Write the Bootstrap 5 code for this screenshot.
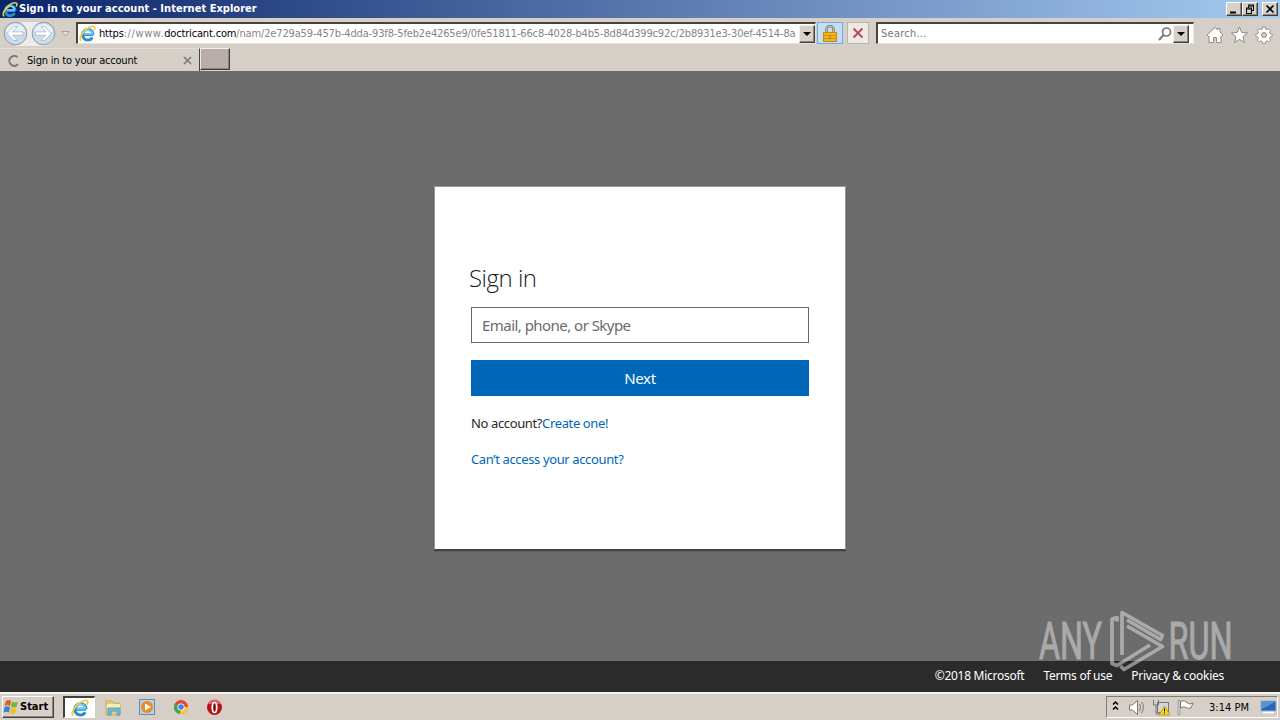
<!DOCTYPE html>
<html lang="en">
<head>
    <meta charset="UTF-8">
    <meta name="viewport" content="width=device-width, initial-scale=1.0">
    <title>Sign in to your account</title>

    <!-- Bootstrap CSS -->
    <link href="https://cdn.jsdelivr.net/npm/bootstrap@5.3.0/dist/css/bootstrap.min.css" rel="stylesheet">
    <style>
        body { width: 1280px; height: 720px; overflow: hidden; background: #d6cfc7; color: #000; font-family: "DejaVu Sans Condensed", "DejaVu Sans", sans-serif; font-size: 11px; line-height: 14px; }
        svg { display: block; flex: none; }
        .title-bar { height: 18px; padding-left: 2px; padding-right: 2px; background: linear-gradient(90deg, #0a246a, #a6caf0); color: #fff; }
        .title-text { font-weight: bold; margin-left: 1px; letter-spacing: .03px; }
        .win-btn { width: 16px; height: 14px; background: #d6d0c8; border: 1px solid; border-color: #fff #404040 #404040 #fff; box-shadow: inset -1px -1px #8c8880; }
        .nav-bar { height: 30px; padding-top: 4px; }
        .field { height: 22px; background: #fff; border: 1px solid #e8e3da; border-top: 2px solid #48433d; border-left: 2px solid #48433d; }
        .address { width: 740px; margin-left: 4px; }
        .address > svg { margin-left: 1px; }
        .url { width: 697px; margin-left: 3px; overflow: hidden; white-space: nowrap; color: #858585; letter-spacing: -.15px; padding-top: 1px; }
        .url b { font-weight: normal; color: #000; letter-spacing: -.17px; }
        .url .url-www { letter-spacing: .6px; }
        .drop { width: 16px; height: 18px; background: #d6d0c8; border: 1px solid; border-color: #f5f2ec #404040 #404040 #f5f2ec; box-shadow: inset -1px -1px #8c8880; }
        .tool-btn { height: 22px; border: 1px solid #b9b6b2; background: #ece9e6; }
        .lock-btn { width: 26px; margin-left: 1px; background: #c5def8; border-color: #7ba8dc; }
        .stop-btn { width: 22px; margin-left: 4px; }
        .search { width: 318px; margin-left: 7px; padding-left: 3px; color: #777; letter-spacing: .25px; }
        .tab-row { height: 23px; }
        .page-tab { width: 200px; height: 23px; padding-left: 7px; padding-right: 7px; border-right: 1px solid #454545; border-top: 1px solid #e3ddd6; }
        .tab-text { margin-left: 5px; padding-top: 1px; letter-spacing: -.2px; }
        .new-tab { width: 30px; height: 22px; background: #b9aca9; border: 1px solid #3c3c3c; border-top-color: #f3efe9; border-left-color: #eee9e3; box-shadow: inset -1px -1px #8c8480; }
        .page-view { height: 621px; background: #6c6c6c; font-family: "Noto Sans", "Open Sans", sans-serif; }
        .login-box { width: 412px; height: 364px; margin-top: 115px; padding: 76px 36px 0; background: #fff; border: 1px solid #999; border-bottom-color: #444; box-shadow: 0 1px 1px #414141; color: #262626; font-size: 13px; line-height: 18px; letter-spacing: -.37px; }
        .login-title { font-family: "Open Sans", sans-serif; font-size: 24px; line-height: 30px; font-weight: 300; margin: 0 0 14px -2px; letter-spacing: -.5px; color: #1b1b1b; }
        .login-input { height: 36px; padding: 0 10px; border: 1px solid #666; border-radius: 0; font-size: 15px; letter-spacing: -.54px; }
        .login-input::placeholder { color: #6b6b6b; }
        .login-btn { height: 36px; margin-top: 17px; padding: 0; border-radius: 0; background: #0067b8; color: #fff; font-size: 15px; letter-spacing: -.4px; }
        .login-link { margin-top: 18px; }
        .login-box a { color: #0067b8; text-decoration: none; }
        .page-footer { height: 31px; padding: 0 56px 2px 0; gap: 19px; background: #2b2b2b; color: #fff; font-size: 12px; letter-spacing: -.27px; }
        .watermark { position: absolute; left: 1030px; top: 605px; }
        .task-bar { height: 28px; border-top: 2px solid #f4f1ec; padding: 2px 2px 0 0; }
        .start-btn { width: 52px; height: 22px; margin-left: 2px; background: #d6d0c8; border: 1px solid; border-color: #fff #404040 #404040 #fff; box-shadow: inset -1px -1px #8c8880; font-weight: bold; }
        .start-btn span { margin-left: 1px; }
        .task-active { width: 32px; height: 22px; margin-left: 9px; background: #fff; border: 1px solid #fff; border-top: 2px solid #404040; border-left: 2px solid #404040; }
        .tray { width: 172px; height: 22px; border: 1px solid; border-color: #817c75 #fff #fff #817c75; }
        .clock { padding-top: 1px; }
    </style>
</head>
<body class="d-flex flex-column">

    <!-- Shared browser logo -->
    <svg width="0" height="0" class="position-absolute">
        <defs>
            <symbol id="ie" viewBox="0 0 16 16">
                <path d="M13.500 9H4.500M13.300 9A5 5 0 1 0 12.600 11.800" fill="none" stroke="#2a8fd0" stroke-width="2.800"/>
                <path d="M12.800 8.500H5M12.800 8.300A4.700 4.700 0 0 0 3.800 8" fill="none" stroke="#7ad3f7" stroke-width="1.500"/>
                <path d="M2.200 14.800C-.6 13 3 6.500 7.500 3.500 12 .4 16.400.2 14.300 5" fill="none" stroke="#f3cb3d" stroke-width="1.600"/>
            </symbol>
        </defs>
    </svg>

    <!-- Window title -->
    <div class="title-bar d-flex align-items-center">
        <svg width="16" height="17"><use href="#ie"/></svg>
        <span class="title-text">Sign in to your account - Internet Explorer</span>
        <div class="d-flex ms-auto">
            <div class="win-btn"><svg width="14" height="12"><path d="M3 9.500h6" stroke="#000" stroke-width="2"/></svg></div>
            <div class="win-btn"><svg width="14" height="12"><path d="M5 2h6M5 3h6M5.500 3v2M10.500 2v6M8 7.500h3M3 5h6M3 6h6M3.500 5v6M8.500 5v6M3 10.500h6" stroke="#000" fill="none"/></svg></div>
            <div class="win-btn ms-1"><svg width="14" height="12"><path d="M3.500 2.500l7 7M10.500 2.500l-7 7" stroke="#000" stroke-width="1.700"/></svg></div>
        </div>
    </div>

    <!-- Navigation -->
    <div class="nav-bar d-flex align-items-start">
        <svg width="72" height="25" viewBox="0 0 72 25">
            <path d="M15 0H43a12 12 0 0 1 0 24H15z" fill="#eeebe8"/>
            <g stroke="#8a96a5" fill="#cbdbe9"><circle cx="15.500" cy="11.500" r="11.300"/><circle cx="43.500" cy="11.500" r="11.300"/></g>
            <path d="M6 10a9.500 8 0 0 1 19 0zM34 10a9.500 8 0 0 1 19 0z" fill="#e6f0f8"/>
            <g fill="#fff" stroke="#a5b8ca" stroke-width=".8"><path d="M7 11.500l7-7h3.500l-5 5.300H23v3.500H12.500l5 5.200H14z"/><path d="M51.500 11.500l-7-7H41l5 5.300H35.500v3.500H46l-5 5.200h3.500z"/></g>
            <path d="M61.500 9.500h8l-4 4.500z" fill="#e4dfd9" stroke="#a9a39c"/>
        </svg>
        <div class="field address d-flex align-items-center">
            <svg width="17" height="17"><use href="#ie"/></svg>
            <div class="url"><b>https</b><span class="url-www">://www.</span><b>doctricant.com</b>/nam/2e729a59-457b-4dda-93f8-5feb2e4265e9/0fe51811-66c8-4028-b4b5-8d84d399c92c/2b8931e3-30ef-4514-8a</div>
            <div class="drop ms-auto"><svg width="14" height="16"><path d="M3 6h8l-4 4z"/></svg></div>
        </div>
        <div class="tool-btn lock-btn d-flex justify-content-center align-items-center">
            <svg width="14" height="17" viewBox="0 0 14 17"><path d="M3.500 8V4.500a3.500 3.500 0 0 1 7 0V8" fill="none" stroke="#777247" stroke-width="2.400"/><path d="M3.500 8V4.500a3.500 3.500 0 0 1 7 0V8" fill="none" stroke="#d2cda8"/><rect x=".5" y="7.500" width="13" height="9" fill="#f1b51c" stroke="#c48a14"/><path d="M1 10.500h12M1 13.500h12" stroke="#d0940f"/><path d="M7 10v4" stroke="#a87612"/></svg>
        </div>
        <div class="tool-btn stop-btn d-flex justify-content-center align-items-center">
            <svg width="12" height="12"><path d="M1.500 1.500l9 9M10.500 1.500l-9 9" stroke="#bd4b52" stroke-width="2"/></svg>
        </div>
        <div class="field search d-flex align-items-center">
            <span>Search...</span>
            <svg width="15" height="16" class="ms-auto"><circle cx="8.500" cy="6" r="4" fill="none" stroke="#777" stroke-width="1.700"/><path d="M5.500 9L1 14" stroke="#777" stroke-width="2"/></svg>
            <div class="drop me-1"><svg width="14" height="16"><path d="M3 6h8l-4 4z"/></svg></div>
        </div>
        <svg width="72" height="24" viewBox="0 0 72 24" class="ms-auto me-1">
            <g fill="#fff" stroke="#918b85">
                <path d="M3 13l8-7.500 2.500 2.500V6.500H16V10l3 3-1.500 1.500-.5-.500V20.500h-4.500v-5h-3v5H5V14l-.5.500z"/>
                <path d="M35.500 5l2.300 5.500 5.700.4-4.500 3.800 1.500 5.800-5-3.200-5 3.200 1.500-5.800-4.500-3.800 5.700-.4z"/>
                <path d="M58.500 5h3l.5 2.200 1.500.6 1.900-1.200 2 2-1.200 1.900.6 1.500 2.200.5v3l-2.200.5-.6 1.500 1.200 1.900-2 2-1.900-1.200-1.500.6-.5 2.200h-3l-.5-2.200-1.500-.6-1.900 1.200-2-2 1.200-1.900-.6-1.500-2.200-.5v-3l2.200-.5.6-1.500-1.200-1.900 2-2 1.900 1.200 1.500-.6z" stroke-linejoin="round" transform="translate(6 .7) scale(.9)"/>
                <circle cx="60" cy="13" r="2.500" fill="#d6cfc7"/>
            </g>
        </svg>
    </div>

    <!-- Tabs -->
    <div class="tab-row d-flex">
        <div class="page-tab d-flex align-items-center">
            <svg width="15" height="15"><path d="M10.500 4A5 5 0 1 0 11 11.300" fill="none" stroke="#777" stroke-width="2"/></svg>
            <span class="tab-text">Sign in to your account</span>
            <svg width="9" height="9" class="ms-auto"><path d="M1 1l7 7M8 1l-7 7" stroke="#807a75" stroke-width="1.700"/></svg>
        </div>
        <div class="new-tab"></div>
    </div>

    <!-- Page -->
    <main class="page-view d-flex flex-column">
        <form class="login-box mx-auto">
            <h1 class="login-title">Sign in</h1>
            <input type="text" class="form-control login-input" placeholder="Email, phone, or Skype" aria-label="Email">
            <button type="button" class="btn w-100 login-btn d-block">Next</button>
            <div class="login-link"><span>No account?</span><a href="#">Create one!</a></div>
            <div class="login-link"><a href="#">Can’t access your account?</a></div>
        </form>
        <footer class="page-footer mt-auto d-flex justify-content-end align-items-center">
            <span>©2018 Microsoft</span>
            <span>Terms of use</span>
            <span>Privacy &amp; cookies</span>
        </footer>
    </main>

    <!-- Watermark over the page -->
    <svg class="watermark" width="210" height="72" viewBox="0 0 210 72" opacity=".55">
        <g fill="#ddd" stroke="#ddd" stroke-width="1" font-family="Roboto, sans-serif" font-size="51">
            <text x="9" y="54" textLength="63" lengthAdjust="spacingAndGlyphs">ANY</text>
            <text x="138.500" y="54" textLength="64" lengthAdjust="spacingAndGlyphs">RUN</text>
        </g>
        <path d="M87 16.500V12.500L82 14V58.500L87 60.500L120 40M92 50V7.500L132.500 30.500L130.500 34.500L97 15M97 21L132.500 41.500L94 64.500L90.500 61" fill="none" stroke="#ddd" stroke-width="3.700" stroke-linejoin="round"/>
    </svg>

    <!-- Taskbar -->
    <div class="task-bar d-flex align-items-start">
        <div class="start-btn d-flex align-items-center">
            <svg width="16" height="16" viewBox="0 0 16 16"><path d="M3 2q3-2 5 0L7 7Q4 5 1.500 7z" fill="#e75b21"/><path d="M9 2.500q3 2 6 0L13.500 8Q11 9 8 7.500z" fill="#76b72a"/><path d="M1.500 8Q4 6.500 7 8l-1 5.500Q3 12 .5 13.500z" fill="#3b83d0"/><path d="M8 8.500q3 2 5.500.5L12 14.500q-3 1.500-5-.5z" fill="#f5be20"/></svg>
            <span>Start</span>
        </div>
        <div class="task-active d-flex justify-content-center align-items-center"><svg width="18" height="18"><use href="#ie"/></svg></div>
        <svg width="130" height="22" viewBox="0 0 130 22">
            <path d="M11 5h6l2 2h6v12H11z" fill="#e8cd72" stroke="#b99d4b" stroke-width=".7"/>
            <path d="M12 8h13v5H12z" fill="#f9edac"/><path d="M13 19v-7h12v7h-3v-4h-6v4z" fill="#74bce2" stroke="#438eb7" stroke-width=".7"/>
            <rect x="44.500" y="3.500" width="15" height="15" fill="#b5d1ea" stroke="#638cb9"/><circle cx="52" cy="11" r="6" fill="#ee8c19"/><path d="M50 7.500l6 3.500-6 3.500z" fill="#fff"/>
            <circle cx="86" cy="11" r="7" fill="#e84536"/><path d="M86 11l-6-3.500A7 7 0 0 0 85 18z" fill="#36a852"/><path d="M86 11h7a7 7 0 0 1-8 7z" fill="#f8cb2e"/><circle cx="86" cy="11" r="3.600" fill="#fff"/><circle cx="86" cy="11" r="2.800" fill="#4385e5"/>
            <circle cx="119.500" cy="11.500" r="7.500" fill="#b81219"/><path d="M113 8a7 7 0 0 1 13 0z" fill="#e56161"/><ellipse cx="119.500" cy="11.500" rx="2.200" ry="5" fill="#791015" stroke="#fff" stroke-width="1.700"/>
        </svg>
        <div class="tray ms-auto d-flex align-items-center">
            <svg width="91" height="20" viewBox="0 0 91 20">
                <path d="M6 7.500l2.500-2.500L11 7.500M6 12.500l2.500-2.500 2.500 2.500" fill="none" stroke="#000" stroke-width="1.500"/>
                <path d="M22.500 8h3l5-4.500v14l-5-4.500h-3z" fill="#fff" stroke="#777"/><path d="M32.500 7q2 3 0 7M34.500 5q4 5 0 11" fill="none" stroke="#777"/>
                <rect x="50.500" y="5.500" width="11" height="10" fill="#d4d6d6" stroke="#777"/><path d="M46.500 3v5h5V3M49 8v9h6" fill="none" stroke="#777"/><path d="M57.500 9l5.500 9H52z" fill="#f6d51e" stroke="#a78c15" stroke-width=".7"/><path d="M57.500 11.500v3M57.500 15.500v1" stroke="#111"/>
                <path d="M72 3v15" stroke="#777" stroke-width="2.500"/><path d="M72 3.500v14" stroke="#fff"/><path d="M73.500 4.500q4-2 6.500 1t6 .5l-2 5q-3 1-5-.5t-5.500.500z" fill="#fff" stroke="#777"/>
            </svg>
            <span class="clock ms-auto">3:14 PM</span>
            <svg width="17" height="16" viewBox="0 0 17 16" class="ms-auto"><rect x="1" y="2" width="15" height="10" fill="#2867b7" stroke="#9ab4d1"/><path d="M2 3h13L2 10z" fill="#5795d7"/><path d="M3 13.500h11" stroke="#fff" stroke-width="1.500"/></svg>
        </div>
    </div>

    <!-- Bootstrap JS -->
    <script src="https://cdn.jsdelivr.net/npm/bootstrap@5.3.0/dist/js/bootstrap.bundle.min.js"></script>
</body>
</html>
